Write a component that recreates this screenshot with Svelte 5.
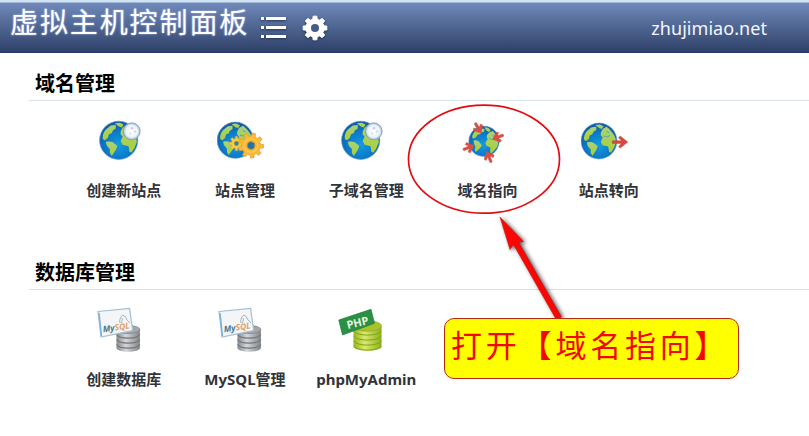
<script lang="ts">
  interface Item {
    label: string;
    icon: string;
  }

  interface Group {
    title: string;
    items: Item[];
  }

  const groups: Group[] = [
    {
      title: "域名管理",
      items: [
        { label: "创建新站点", icon: "moon" },
        { label: "站点管理", icon: "gears" },
        { label: "子域名管理", icon: "moon" },
        { label: "域名指向", icon: "pointing" },
        { label: "站点转向", icon: "redirect" },
      ],
    },
    {
      title: "数据库管理",
      items: [
        { label: "创建数据库", icon: "mysql" },
        { label: "MySQL管理", icon: "mysql" },
        { label: "phpMyAdmin", icon: "php" },
      ],
    },
  ];

  // Outline of a cog centred on the origin
  function cog(teeth: number, outer: number, inner: number) {
    const step = (Math.PI * 2) / teeth;
    const points: string[] = [];
    for (let i = 0; i < teeth; i++) {
      const corners = [
        [-0.3, inner],
        [-0.2, outer],
        [0.2, outer],
        [0.3, inner],
      ];
      for (const [offset, r] of corners) {
        const a = (i + offset) * step - Math.PI / 2;
        points.push(`${(r * Math.cos(a)).toFixed(2)},${(r * Math.sin(a)).toFixed(2)}`);
      }
    }
    return points.join(" ");
  }
</script>

{#snippet globe(x: number, y: number, scale: number, tilt = 0)}
  <g transform="translate({x} {y}) rotate({tilt}) scale({scale})">
    <circle r="19.5" fill="url(#sea)" stroke="#5f9ccc" stroke-width="0.7" />
    <path
      d="M-16-1C-17-5-15-9-13-11L-8-15-3-15.5-3-12-6-10-7-7.5-10-6-11-2.5-14 0Z"
      fill="url(#land)"
    />
    <path d="M-4-17.5 1-18 5-16 3-13 0-14Z" fill="url(#land)" />
    <path
      d="M-13 1.5C-10 1-8 1-6 2L-1.5 5.5C-2 8-3 10-4 11.5L-7 16-9 13-9 9C-11 7-13 5-13 1.5Z"
      fill="url(#land)"
    />
    <path
      d="M2-9 4-13 8-15.5C12-13 16-8 18-3L18.5 2 16 8 13 12.5 11 12 10 6 4 4.5 2 1 4-4 2-6Z"
      fill="url(#land)"
    />
    <path
      d="M5-5.5 9-4.5 12-6M8-10.5 11-9"
      stroke="#4fa0c3"
      stroke-width="1"
      fill="none"
    />
  </g>
{/snippet}

{#snippet redArrow(x: number, y: number, angle: number)}
  <path
    transform="translate({x} {y}) rotate({angle})"
    d="M2 0-4-5.5-6-4-3.5-1.3-9-1.3-10 0-9 1.3-3.5 1.3-6 4-4 5.5Z"
    fill="#dc4d42"
    stroke="#c4564f"
    stroke-width="0.4"
  />
{/snippet}

<svg class="defs" aria-hidden="true">
  <defs>
    <radialGradient id="sea" cx="50%" cy="62%" r="62%">
      <stop offset="0" stop-color="#149be2" />
      <stop offset="0.55" stop-color="#0c7aca" />
      <stop offset="1" stop-color="#13559d" />
    </radialGradient>
    <linearGradient id="land" x1="0" y1="0" x2="0" y2="1">
      <stop offset="0" stop-color="#a8d27a" />
      <stop offset="1" stop-color="#accf32" />
    </linearGradient>
    <radialGradient id="moonlight">
      <stop offset="0" stop-color="#ffffff" />
      <stop offset="0.7" stop-color="#edf3f9" />
      <stop offset="1" stop-color="#a5bdd6" />
    </radialGradient>
    <linearGradient id="steel">
      <stop offset="0" stop-color="#85888c" />
      <stop offset="0.4" stop-color="#d5d7d9" />
      <stop offset="1" stop-color="#808387" />
    </linearGradient>
    <linearGradient id="lime">
      <stop offset="0" stop-color="#94b61b" />
      <stop offset="0.4" stop-color="#dce870" />
      <stop offset="1" stop-color="#88b01a" />
    </linearGradient>
  </defs>
</svg>

<div class="panel">
  <header>
    <h1>虚拟主机控制面板</h1>
    <svg class="list" width="26" height="24" viewBox="0 0 26 24" fill="#fff">
      <path d="M0 1h3v3H0zM5 1h20v3H5zM0 10h3v3H0zM5 10h20v3H5zM0 19h3v3H0zM5 19h20v3H5z" />
    </svg>
    <svg class="settings" width="26" height="26" viewBox="-13 -13 26 26">
      <polygon points={cog(8, 12, 9.2)} fill="#fff" stroke="#fff" stroke-linejoin="round" />
      <circle r="4" fill="#465a88" />
    </svg>
    <span class="domain">zhujimiao.net</span>
  </header>

  <main>
    {#each groups as group}
      <section>
        <h2>{group.title}</h2>
        <div class="items">
          {#each group.items as item}
            <div class="item">
              <svg width="56" height="56" viewBox="0 0 56 56">
                {#if item.icon === "moon"}
                  {@render globe(22.7, 28.3, 0.98)}
                  <circle cx="35.7" cy="19.3" r="8.4" fill="url(#moonlight)" stroke="#86a2c1" />
                  <circle cx="36" cy="16.2" r="1.3" fill="#c2d2e0" />
                  <circle cx="39" cy="19.5" r="1" fill="#c2d2e0" />
                  <circle cx="34" cy="21.5" r="0.9" fill="#cfdae4" />
                {:else if item.icon === "gears"}
                  {@render globe(18.3, 28.2, 0.93)}
                  <g transform="translate(19.5 31.5)">
                    <polygon points={cog(8, 7.3, 5.2)} fill="#f8ce3c" stroke="#cfa038" stroke-width="0.5" />
                    <circle r="2.2" fill="#2f83ab" stroke="#b78119" stroke-width="0.4" />
                  </g>
                  <g transform="translate(34 33.5) rotate(14)">
                    <polygon points={cog(9, 12.6, 9.5)} fill="#fcb932" stroke="#e0a048" stroke-width="0.7" />
                    <circle r="6.7" fill="none" stroke="#ffcf5f" />
                    <circle r="3.8" fill="#1b75ae" stroke="#cd8e2c" stroke-width="0.8" />
                  </g>
                {:else if item.icon === "pointing"}
                  {@render globe(24, 29.3, 0.78, 14)}
                  {@render redArrow(20, 19.3, 60)}
                  {@render redArrow(34.5, 26.5, 159)}
                  {@render redArrow(12.2, 34.2, -21)}
                  {@render redArrow(27.5, 41.5, -113)}
                {:else if item.icon === "redirect"}
                  {@render globe(18, 29, 0.92)}
                  <path
                    d="M31.3 28.8h9.2l-3-3.2 1.7-1.5 7.6 6-7.6 6-1.7-1.5 3-3.2h-9.2Z"
                    fill="#dc463b"
                    stroke="#bd4740"
                    stroke-width="0.5"
                  />
                {:else if item.icon === "mysql"}
                  <path
                    d="M20.5 28v18.5c0 2 5 3.8 11.7 3.8s11.7-1.8 11.7-3.8V28Z"
                    transform="translate(0 .5)"
                    fill="url(#steel)"
                  />
                  <ellipse cx="32.2" cy="28.5" rx="11.7" ry="4" fill="#a4a7aa" stroke="#7d8084" stroke-width="0.7" />
                  <path
                    d="M20.5 33.5c3 4.8 20.4 4.8 23.4 0M20.5 38.5c3 4.8 20.4 4.8 23.4 0M20.5 43.5c3 4.8 20.4 4.8 23.4 0"
                    fill="none"
                    stroke="#737679"
                    stroke-width="1.2"
                  />
                  <path d="M2 10.5 33.6 7.5 36.7 29.5 5 36Z" fill="#f3f5f6" stroke="#a0bed5" stroke-width="1.2" />
                  <path d="M3 12 5.5 35" stroke="#75b0dd" stroke-width="1.4" />
                  <path
                    d="M24 22c-1-3 1-7 3-8 3 1 3 5 6 7l1 1M25 22c1-2 2-3 1-5"
                    fill="none"
                    stroke="#8a9eac"
                    stroke-width="0.8"
                  />
                  <text class="mysql" transform="translate(7.2 31.2) rotate(-8)"
                    >My<tspan fill="#dfa16c">SQL</tspan></text
                  >
                {:else}
                  <path
                    d="M15.5 25v20.5c0 2.5 6 4.3 14 4.3s14-1.8 14-4.3V25Z"
                    fill="url(#lime)"
                  />
                  <ellipse cx="29.5" cy="25" rx="14" ry="5.2" fill="#a8c42a" stroke="#86aa27" stroke-width="0.7" />
                  <path
                    d="M15.5 30c4 5.5 24 5.5 28 0M15.5 35c4 5.5 24 5.5 28 0M15.5 40c4 5.5 24 5.5 28 0M15.5 45c4 5.5 24 5.5 28 0"
                    fill="none"
                    stroke="#7fa616"
                    stroke-width="1"
                  />
                  <path d="M.8 19 33 8.3 36.5 22.3 4.5 34Z" fill="#2a9045" stroke="#237b3d" stroke-width="0.7" />
                  <text class="php" transform="translate(9.7 28) rotate(-13)">PHP</text>
                {/if}
              </svg>
              <span class="label">{item.label}</span>
            </div>
          {/each}
        </div>
      </section>
    {/each}
  </main>

  <svg class="marks" width="809" height="436" viewBox="0 0 809 436">
    <ellipse cx="484" cy="159.2" rx="75.5" ry="54" fill="none" stroke="#e10b10" stroke-width="1.7" />
    <path class="pointer" d="M500 217 523.5 241.5 518.5 242 561.5 317 556 319 513.5 244.5 510 249.5Z" />
  </svg>
  <div class="callout">打开【域名指向】</div>
</div>

<style>
  :global(body) {
    margin: 0;
    background: #fff;
  }

  .panel {
    position: relative;
    width: 809px;
    height: 436px;
    overflow: hidden;
    font-family: "Noto Sans", "Noto Sans CJK SC", sans-serif;
  }

  .defs {
    position: absolute;
    width: 0;
    height: 0;
  }

  header {
    display: flex;
    align-items: flex-start;
    box-sizing: border-box;
    height: 53px;
    padding: 0 42px 0 10px;
    border-top: 2px solid #d0e3f5;
    border-bottom: 1px solid #2c3b65;
    background: linear-gradient(#a0b6d2 0 1px, #6f89ba 1px, #2e4068 100%);
    color: #fff;
  }

  h1 {
    width: 240px;
    margin: 0;
    font: 400 28px/38px "Noto Sans CJK SC", sans-serif;
    letter-spacing: 1.9px;
    white-space: nowrap;
    text-shadow: 0 0 2px #b9c6fa;
  }

  header svg {
    filter: drop-shadow(0 1px 1px #263654);
  }

  .list {
    margin: 14px 0 0 11px;
  }

  .settings {
    margin: 13px 0 0 15px;
  }

  .domain {
    margin-left: auto;
    font-size: 18px;
    line-height: 52px;
    letter-spacing: 0.05px;
    color: #f3f7ff;
  }

  main {
    padding-left: 29px;
  }

  section {
    height: 189px;
  }

  h2 {
    box-sizing: border-box;
    height: 48px;
    margin: 0;
    padding: 14px 0 0 6px;
    border-bottom: 1px solid #d9e2e6;
    font: 700 20px/32px "Noto Sans CJK SC", sans-serif;
    color: #000;
  }

  .items {
    display: flex;
    padding: 11px 0 0 34px;
  }

  .item {
    display: flex;
    flex: 0 0 121.3px;
    flex-direction: column;
    align-items: center;
  }

  .label {
    margin-top: 12px;
    font-size: 15px;
    font-weight: 700;
    line-height: 20px;
    white-space: nowrap;
    color: #30343a;
  }

  .mysql {
    font: italic 700 8.5px "Noto Sans", sans-serif;
    fill: #4a7690;
  }

  .php {
    font: 700 11px "Noto Sans", sans-serif;
    fill: #e7f6df;
  }

  .marks {
    position: absolute;
    top: 0;
    left: 0;
  }

  .pointer {
    fill: #fb0505;
    stroke: #cf1212;
    stroke-width: 0.6;
    filter: drop-shadow(2px 1px 2px #555);
  }

  .callout {
    position: absolute;
    top: 318px;
    left: 444px;
    box-sizing: border-box;
    width: 295px;
    height: 61px;
    padding-left: 6px;
    border: 1px solid #b42b12;
    border-radius: 10px;
    background: #ff0;
    font: 400 31px/50px "Noto Sans CJK SC", sans-serif;
    letter-spacing: 3.8px;
    white-space: nowrap;
    color: #f20808;
  }
</style>
